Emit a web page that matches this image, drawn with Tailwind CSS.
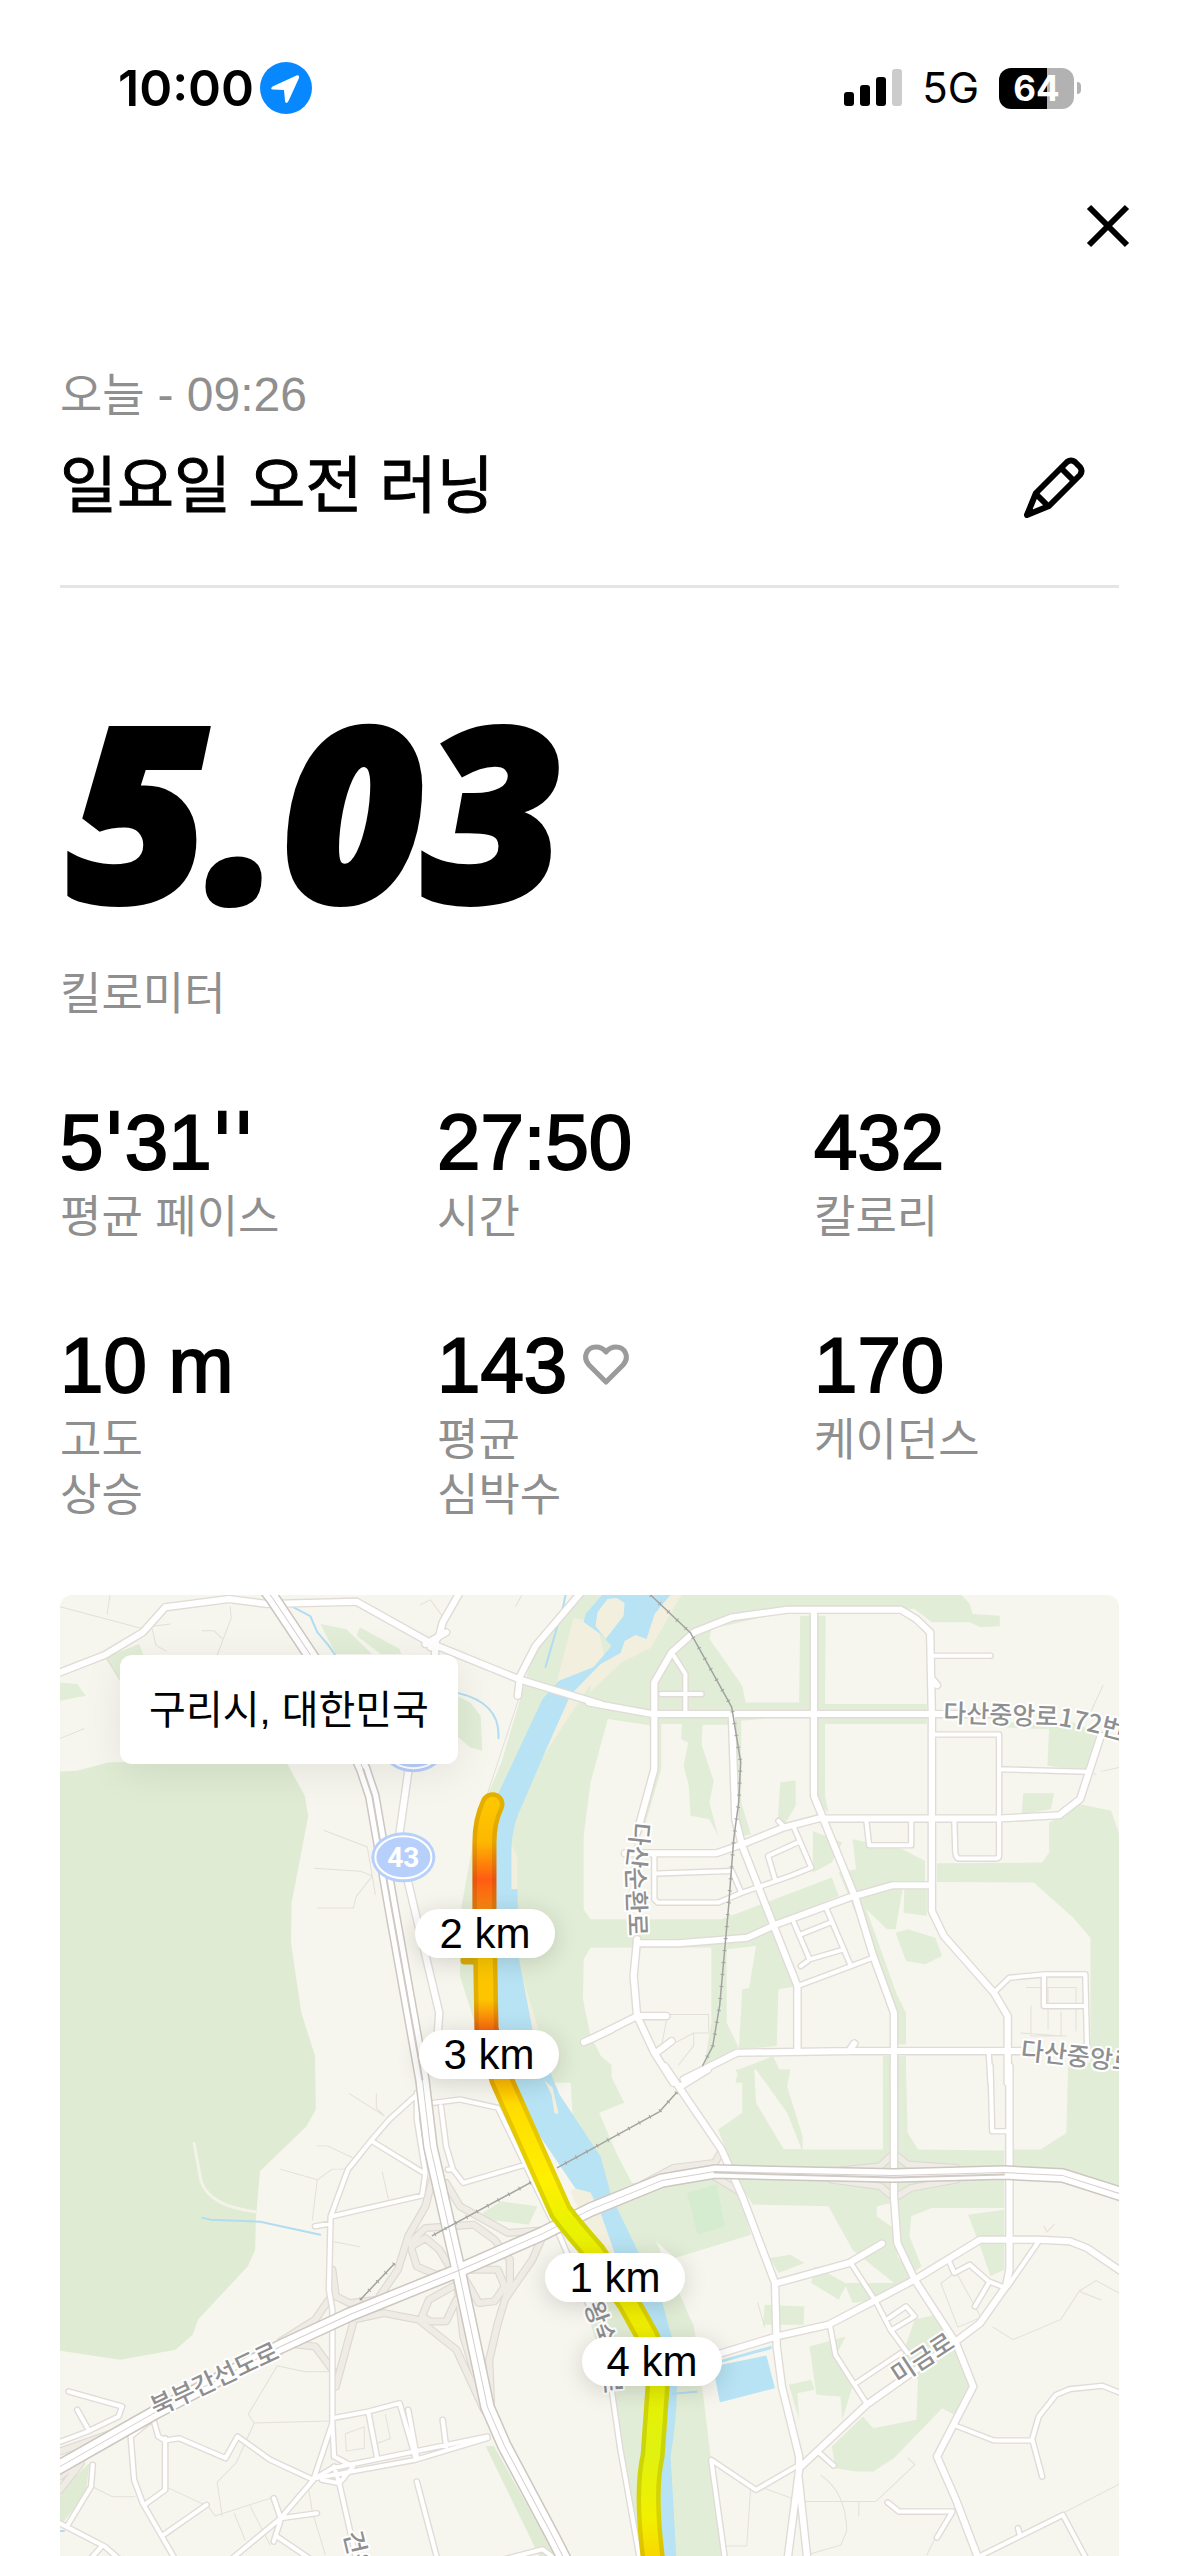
<!DOCTYPE html>
<html lang="ko">
<head>
<meta charset="utf-8">
<meta name="viewport" content="width=device-width, initial-scale=1">
<title>일요일 오전 러닝</title>
<script src="https://cdn.jsdelivr.net/npm/@tailwindcss/browser@4"></script>
</head>
<body class="flex min-h-screen flex-col bg-white font-['Liberation_Sans','Noto_Sans_CJK_KR',sans-serif] text-black">

<header>
  <div class="flex h-44 items-center justify-between pl-[118px] pr-[98px] font-['Inter',sans-serif]">
    <div class="flex items-center gap-1.5">
      <span class="text-[50px] leading-none font-semibold">10:00</span>
      <svg class="size-[52px]" viewBox="0 0 52 52" role="img" aria-label="위치 사용 중"><circle cx="26" cy="26" r="26" fill="#0788ff"/><path d="M36.500 13.500 12.500 24.500Q9.500 27 13 27.500L24 28 25 39Q26 43 28.500 39L39 16Q39.500 12.500 36.500 13.500Z" fill="#fff"/></svg>
    </div>
    <div class="flex items-center gap-5">
      <svg class="h-[38px] w-[58px]" viewBox="0 0 58 38" role="img" aria-label="신호"><rect y="23" width="10" height="14" rx="3"/><rect x="16" y="16" width="10" height="21" rx="3"/><rect x="32" y="8" width="10" height="29" rx="3"/><rect x="48" width="10" height="37" rx="3" fill="#ccc"/></svg>
      <span class="text-[42px] leading-none">5G</span>
      <div class="flex items-center gap-[3px]">
        <div class="flex h-[41px] w-[75px] items-center justify-center rounded-xl bg-linear-to-r from-black from-64% to-[#b2b2b2] to-64% text-[35px] leading-none font-bold text-white">64</div>
        <div class="h-3 w-1 rounded-r-full bg-[#b2b2b2]"></div>
      </div>
    </div>
  </div>
  <div class="flex h-[100px] items-center justify-end pr-[39px]">
    <button type="button" aria-label="닫기" class="size-16"><svg class="size-16" viewBox="0 0 64 64" fill="none" stroke="#000" stroke-width="6"><path d="M13 13 51 51M51 13 13 51"/></svg></button>
  </div>
</header>

<main class="flex grow flex-col px-[60px] pt-[89px]">
  <p class="text-[46px] leading-[60px] text-[#8f8f8f]">오늘 <span class="text-[48px]">- 09:26</span></p>
  <div class="mt-[17px] flex h-[146px] items-start justify-between border-b-3 border-[#e5e5e5] pr-[30px]">
    <h1 class="text-[62px] leading-[90px] [-webkit-text-stroke:1px_black]">일요일 오전 러닝</h1>
    <button type="button" aria-label="이름 편집" class="mt-2.5 size-[70px]"><svg class="size-[70px]" viewBox="0 0 70 70" fill="none" stroke="#000" stroke-width="6" stroke-linejoin="round"><path d="M17 41 48 10Q52 7 56 10L61 15Q64 19 61 23L30 54 8 63Z"/><path d="M42 16 55 29M17 42 29 54"/></svg></button>
  </div>

  <p class="mt-[120px] pl-2 text-[242px] leading-[200px] font-extrabold italic font-['Open_Sans',sans-serif] [-webkit-text-stroke:6px_black]">5.03</p>
  <p class="mt-[59px] text-[45px] leading-[55px] text-[#8f8f8f]">킬로미터</p>

  <dl class="mt-20 grid grid-cols-3 gap-x-[72px] gap-y-20">
    <div class="flex flex-col-reverse justify-end gap-2">
      <dt class="text-[45px] leading-[55px] whitespace-nowrap text-[#8f8f8f]">평균 페이스</dt>
      <dd class="text-[78px] leading-[80px] [-webkit-text-stroke:2px_black]">5<span class="leading-[40px] font-['DejaVu_Sans',sans-serif]">'</span>31<span class="leading-[40px] font-['DejaVu_Sans',sans-serif]">''</span></dd>
    </div>
    <div class="flex flex-col-reverse justify-end gap-2">
      <dt class="text-[45px] leading-[55px] text-[#8f8f8f]">시간</dt>
      <dd class="text-[78px] leading-[80px] [-webkit-text-stroke:2px_black]">27:50</dd>
    </div>
    <div class="flex flex-col-reverse justify-end gap-2">
      <dt class="text-[45px] leading-[55px] text-[#8f8f8f]">칼로리</dt>
      <dd class="text-[78px] leading-[80px] [-webkit-text-stroke:2px_black]">432</dd>
    </div>
    <div class="flex flex-col-reverse justify-end gap-2">
      <dt class="text-[45px] leading-[55px] text-[#8f8f8f]">고도<br>상승</dt>
      <dd class="text-[78px] leading-[80px] [-webkit-text-stroke:2px_black]">10 m</dd>
    </div>
    <div class="flex flex-col-reverse justify-end gap-2">
      <dt class="text-[45px] leading-[55px] text-[#8f8f8f]">평균<br>심박수</dt>
      <dd class="flex items-center gap-4 text-[78px] leading-[80px] [-webkit-text-stroke:2px_black]">143
        <svg class="h-[42px] w-[46px]" viewBox="0 0 46 42" fill="none" stroke="#9b9b9b" stroke-width="5" stroke-linejoin="round"><path d="M23 38 6 21C-1 13 4 3 13 3Q19 3 23 8Q27 3 33 3C42 3 47 13 40 21Z"/></svg>
      </dd>
    </div>
    <div class="flex flex-col-reverse justify-end gap-2">
      <dt class="text-[45px] leading-[55px] text-[#8f8f8f]">케이던스</dt>
      <dd class="text-[78px] leading-[80px] [-webkit-text-stroke:2px_black]">170</dd>
    </div>
  </dl>

  <section aria-label="러닝 경로 지도" class="relative mt-[72px] min-h-[940px] grow overflow-hidden rounded-t-xl bg-[#f6f6ee]">
    <svg class="absolute inset-0 size-full" viewBox="0 0 1059 960" preserveAspectRatio="xMinYMin slice" fill="none" stroke-linejoin="round" stroke-linecap="round">
      <defs>
        <linearGradient id="pace" gradientUnits="userSpaceOnUse" x1="0" y1="209" x2="0" y2="960">
          <stop offset="0" stop-color="#fdc600"/><stop offset=".05" stop-color="#fdb800"/><stop offset=".1" stop-color="#ff5b12"/><stop offset=".14" stop-color="#f78a10"/><stop offset=".2" stop-color="#fcc800"/><stop offset=".26" stop-color="#fdc400"/><stop offset=".3" stop-color="#f8680f"/><stop offset=".36" stop-color="#fcb000"/><stop offset=".4" stop-color="#ffdc00"/><stop offset=".5" stop-color="#fff000"/><stop offset=".56" stop-color="#e9f200"/><stop offset=".65" stop-color="#f5ee00"/><stop offset=".76" stop-color="#eaf000"/><stop offset=".86" stop-color="#dff210"/><stop offset=".95" stop-color="#f1f000"/><stop offset="1" stop-color="#f8d800"/>
        </linearGradient>
        <g id="wide">
          <path transform="translate(0 -6) scale(.3444 .3333)" d="M-20 258 130 198 240 130 305 55 490 30 600 45 860 38 1080 165 1330 270 1568 345M1165 0 1110 100 1100 140 1075 175M1120 130 1060 165M1090 160 1085 240M1520 0 1380 170 1335 260 1328 320M1025 440 985 730M1010 880 1100 1270 1090 1420M1520 1358 1600 1320"/>
          <path transform="translate(530 -6) scale(.3444 .3333)" d="M-5 340 180 375H1200M185 375V280L235 190 300 130 410 85 570 62H900L945 90 985 130 990 380V965L1025 1040 1170 1210 1210 1280V1480M185 375V540L135 730M135 1050 125 1160 135 1280 185 1390 240 1480M648 62V620L770 930 820 1100 880 1270V1480M410 380 420 690 440 770 600 1190V1380M100 792H365L440 765 560 715 660 688H1185L1360 678 1420 630 1480 440M135 1062H255L455 1045 540 1005 750 925 875 888H985M0 1350 135 1280H220M190 1390 235 1355M270 1470 425 1390 750 1385H1250M750 1385 765 1362M990 270 1005 288"/>
          <path transform="translate(530 474) scale(.3444 .3333)" d="M215 -10 380 240 440 380 535 640 540 830 555 950 605 1160V1200L570 1480M603 1220 630 1480M880 -10V380L890 520 940 630 1060 820 1110 950 1005 1160 1060 1290 1130 1480M1215 -10V600L1205 650 1130 760 1060 815 800 1005 610 1190M540 640 750 580 845 522M380 850 540 800 690 765 940 630 1130 510H1300L1390 515 1440 535 1560 620M262 50 340 0"/>
        </g>
        <g id="narrow">
          <path transform="translate(530 -6) scale(.3444 .3333)" d="M235 190 275 255V370M205 315H322M990 200H1160M1000 436H1185V800Q1185 808 1170 808H1070Q1060 808 1058 790L1055 690M1185 540 1440 548M800 695 808 768H930V695M185 800V930L195 940H370L440 910 580 860 640 835 590 715M190 853 410 845 435 905M535 870 515 800 600 760M590 1000 635 1110 735 1080M610 1035 695 1000M685 960 755 1130 820 1105M755 1130 600 1190M1170 1210 1215 1165 1320 1155H1435L1440 1370M1315 1160V1250H1435M1155 1390 1160 1480M610 1130 630 1115M545 695 560 712"/>
          <path transform="translate(530 474) scale(.3444 .3333)" d="M755 580 830 700 870 780 920 850M695 770 710 855 800 1000M770 940 900 850M865 745 915 710 940 740 875 780M1040 575 1055 610 1100 585 1155 635 1205 655M1155 640 1115 710M1300 515 1210 650M1160 -10 1165 185H1210M1065 1070 1170 1112H1280L1300 1040 1350 975 1390 958 1485 948 1550 975M1282 1112 1310 1220M605 1185 480 1260 350 1170 390 1470M665 1150 705 1187M862 1298 895 1325H1050L1005 1403M1130 1458 1370 1335 1445 1480M1240 1375 1245 1395M60 950 85 1130 145 1480"/>
          <path transform="translate(0 474) scale(.3444 .3333)" d="M1030 80 955 150 905 210 835 300 785 440 780 660 790 720V1060L795 1160M790 440 1050 378 1060 310 1035 150V70M905 215 1055 310M1085 100 1160 90 1270 115 1450 500 1540 720M1105 110 1120 230 1140 300 1170 340 1350 285M1125 300H1140M740 470 785 462M25 965 180 1010 170 1040 80 1085-10 1120M50 1020 80 1075M270 1045 285 1100 305 1112 345 1105 480 1165 515 1100 610 1170 735 1230 790 1060M270 1045 205 1100 215 1230 240 1300 335 1470M305 1105V1260L245 1305M300 1395 425 1305M735 1230 640 1345 500 1465M620 1285 640 1345 745 1330M640 1350 620 1415M630 1400 730 1470M790 1045 895 1025 985 1000 1030 1160M895 1030 920 1165M1010 1020 1035 1160M740 1225 790 1195 1240 1100M740 1225 1030 1170 1240 1105M1110 1050 1120 1130M795 1160 850 1190 810 1240 845 1400 860 1470M760 1230 810 1240 795 1190M1035 1235 1095 1470M95 1185 90 1250 20 1370M-10 1355 130 1430 175 1470M90 1465 120 1430M1280 1470 1400 1438 1440 1470"/>
        </g>
        <g id="ramps">
          <path transform="translate(0 474) scale(.3444 .3333)" d="M1080 330 1060 410 1010 500 980 600 920 690 840 700 800 680 790 600M640 815 740 750 780 690M1015 520 1060 475 1200 465 1260 510 1305 570V640L1270 760 1245 870 1250 1000M1020 540 1035 590 1090 615 1160 600M1020 530 1060 505 1100 540 1130 590M1160 600 1270 600 1290 650 1260 695 1215 700 1170 620M1140 650 1070 690 1050 740 1075 755H1120L1150 690M1120 340 1160 410 1300 490 1420 480M1400 500 1370 570 1290 690M850 750 940 730 1040 750 1150 840 1230 1020M1150 620 1170 800 1230 1000M850 760 800 950M640 820 740 830 790 900M0 1220 130 1110 200 1070M0 1260 60 1180M0 1145 150 1090"/>
          <path transform="translate(530 474) scale(.3444 .3333)" d="M150 345 240 295 360 280 380 245M360 320 430 365M700 305 840 290 870 260M1060 295 920 285 890 260M700 330 840 350 875 380M1060 330 930 355 890 380"/>
        </g>
        <g id="highway">
          <path d="M207-4 213 4 253 64 303 174 312 201 331 311 362 484 370 551 398 674 427 811 444 850 492 940 515 985"/>
          <path d="M-6 874 96 816 220 751 289 719 400 674 482 638 530 614 601 585 654 576 833 580 943 577 1002 580 1065 600"/>
        </g>
        <g id="rail">
          <path d="M590 0 630 38 671 112 680 167 678 207 673 244 668 310 659 410 652 451 642 470M616 497 599 516 530 554 497 572M470 587 372 640M334 668 300 704"/>
        </g>
        <path id="route" d="M432 209Q424 226 424 247V314L426 434 441 484 500 616Q512 632 534 657L568 707 587 741Q598 765 597 790L592 860Q584 895 592 960V985"/>
        <path id="nameA" transform="translate(530 -6) scale(.3444 .3333)" d="M1022 398 1360 410Q1450 424 1640 480"/>
        <path id="nameB" transform="translate(530 -6) scale(.3444 .3333)" d="M120 698 104 850 112 1080"/>
        <path id="nameC" transform="translate(530 -6) scale(.3444 .3333)" d="M1246 1408 1650 1455"/>
        <path id="nameD" transform="translate(0 474) scale(.3444 .3333)" d="M278 1040 720 825"/>
        <path id="nameE" transform="translate(530 474) scale(.3444 .3333)" d="M893 944 1120 790"/>
        <path id="nameF" transform="translate(530 474) scale(.3444 .3333)" d="M-18 705 30 850 45 1040"/>
        <path id="nameG" transform="translate(0 474) scale(.3444 .3333)" d="M822 1390 880 1640"/>
      </defs>

      <!-- parks and woods -->
      <g fill="#e2edd7">
        <path transform="translate(0 -6) scale(.3444 .3333)" d="M1500 0 1420 110 1375 180 1335 330 1280 520 1240 620 1200 750 1165 950 1160 1160 1200 1290 1270 1480H1600V0ZM130 205 230 165 243 200 170 270ZM0 280 50 285 75 320 0 335ZM755 105 830 120 905 195H800ZM870 115 985 180 990 195H930L860 140ZM1150 320 1190 340 1220 380 1225 485 1190 475 1150 440Z"/>
        <path fill="#dfebd3" transform="translate(0 -6) scale(.3444 .3333)" d="M0 547 50 545 140 520 500 510 660 525 710 620 720 680 672 940 670 1060 700 1270 740 1400V1482H0Z"/>
        <path fill="#dfebd3" transform="translate(0 474) scale(.3444 .3333)" d="M0 0H740L742 120 715 170 580 305 568 450 566 540 545 590 400 750 385 795 335 840 175 870 0 843ZM0 1260 85 1180 75 1270 0 1370ZM1235 1130 1258 1128 1450 1480H1400Z"/>
        <path transform="translate(0 474) scale(.3444 .3333)" d="M1225 430 1280 395 1385 410 1360 465 1240 450Z"/>
        <path transform="translate(530 -6) scale(.3444 .3333)" d="M-20 0H1060L1100 45 1108 75 1187 80V112L1130 115 1100 100H990L940 60 640 50 350 120 345 150 440 290 450 340H605L608 80H682L680 345 975 345V405H680V620L690 670 655 640 645 375 437 395V640L465 735 420 745 400 407H325L322 465 357 575 345 640 370 740 345 690 290 680 285 590 270 530 283 460 263 450 265 405H205V540L160 700 135 740 100 990H380L700 865 720 920 540 1000 600 1190 545 1200 540 1370 430 1380 440 1200 460 1195 480 1070 395 1080V1300L430 1375 330 1425 350 1300V1075L0 1075V1480H-20Z"/>
        <path transform="translate(530 -6) scale(.3444 .3333)" d="M550 580 595 573V650L560 710 540 740ZM645 725 730 760 700 820 645 850ZM760 750 905 780 970 815V880L905 900 885 1020H860L800 960 890 1220 915 1270V1365H890L885 1260 720 850 770 840ZM910 900H975V980L908 970ZM885 1030 920 1020 1000 1045 1020 1100 970 1125 915 1115ZM1005 822 1310 820 1330 790V700L1360 685 1420 645 1510 665 1535 740V1480H1450V1045L1400 985 1285 880 1005 878ZM1190 400H1400L1470 430 1435 545 1325 530 1330 420 1190 415ZM1255 612H1345L1335 660 1250 675ZM848 1400H915V1480H848ZM1385 1420H1535V1480H1385ZM430 1440 530 1400 565 1480H420ZM0 1340 55 1480H0Z"/>
        <path transform="translate(530 474) scale(.3444 .3333)" d="M-60 0H50L98 100 25 130 75 250 120 340 360 330 430 370 465 495 245 565 190 515 300 770 325 960 385 1480H145L75 1130 60 950-20 700ZM370 180 440 130V40L420 0H580L570 50 615 200V240H848V0H915L920 190 950 240 1200 243V415L990 415 930 440 925 500 960 590 935 610 895 520 875 400 830 410V440L885 480 890 560 935 620 830 690 760 700 740 650 720 690 640 640 650 590 740 640 880 640 760 540 690 410 470 405 430 340ZM1225 240H1305L1380 190 1385 0H1535V350L1370 300 1225 290ZM1095 435 1200 420V600L1160 620 1130 530ZM520 565 580 555 620 580 545 610ZM505 705 620 710 618 765H500ZM635 830 740 800 710 860 760 950 730 1050 725 980 655 975ZM575 945 640 930 650 960 600 970 605 1050ZM940 750 1000 735 1060 850 1100 950 1055 1035 1020 1015 880 1165 820 1205H770L710 1195 700 1130 790 1040 820 1075 945 1050 950 930 900 870Z"/>
      </g>
      <g fill="#f6f6ee">
        <path transform="translate(530 -6) scale(.3444 .3333)" d="M50 390 180 410V540L130 740 100 990H0L-20 960V740L0 580ZM0 1075-20 1110-22 1230 0 1340 30 1400 120 1480H340L325 1430 350 1300V1075Z"/>
        <path transform="translate(530 474) scale(.3444 .3333)" d="M475 0 480 100 560 238H612L570 130 480 0Z"/>
      </g>
      <path fill="#d5ecd0" transform="translate(530 474) scale(.3444 .3333)" d="M280 370 365 345 390 470 310 495Z"/>

      <!-- river, sand banks, pond -->
      <path fill="#f3efdf" d="M513 23 536 27 545 66 482 162 487 145 495 92ZM510 596Q525 584 545 596L560 654 540 664ZM450 247V294H457V261ZM462 382 478 434H470ZM586 19 613-2H622L590 53 560 68 530 97V77Z"/>
      <path fill="#b7e3f4" d="M545-4H613L594 19 586 44 575 40 564 46 560 58 540 69 510 100 484 158 463 207Q450 232 451 260V294H457L458 361 472 434 499 499 540 561 551 601 578 657 601 704 611 741Q622 789 610 860L617 985H600L597 790 585 731 554 657 540 617 530 597 515 593 441 484 426 434 424 314 430 209 437 200 482 104 498 86 533 72 551 51 540 39 523 27 525 19Z"/>
      <path fill="#f3efdf" d="M535 31 537 17 547 4 556 3 564 8 563 21 545 44ZM484 485 492 492 498 518 494 518 491 499Z"/>
      <path fill="#b7e3f4" transform="translate(530 474) scale(.3444 .3333)" d="M355 890 510 857 535 955 405 990 375 997ZM380 870 525 828V838L380 878Z"/>
      <path stroke="#b0ddf1" stroke-width="2" d="M233 12 250 21 257 37 268 50 275 60M398 98Q440 108 438 143M142 622 150 624 200 626 260 639M505 0 503 10 485 72M612 798 636 796M0 935 4 935"/>

      <!-- footpaths -->
      <g stroke="#e3dfd9" stroke-width="1">
        <path transform="scale(1 .968)" d="M0 12 80 34 110 30M50 0 47 20M170 12 171 24 157 62M142 37 154 37 162 45M92 35 96 52 106 58M45 62 60 88M0 148 24 138M264 243 307 260 315 309M254 282 300 285 312 290 296 311 293 323H257M360 10 370 5 382 22M455 12 463-3M458 108 427 205M607 433H648V452H633L600 470 607 433M633 452V465L618 485M970 424V455H1005M987 405V448M1000 430V455L960 452M965 405H1015V450M1030 120 1042 93M1040 182 1058 178M1035 185 1020 182"/>
        <path transform="translate(0 15) scale(1 .968)" d="M289 499 324 522M316 499V514L324 522M257 553H267L292 565M220 577 257 588 272 577H285M257 588 252 630M322 580 328 608M274 652 299 657M188 830 217 780 245 786H268M188 830 194 839 270 837M194 839 176 880 157 900 162 935M33 905 52 915H75M108 906 148 925 155 935 215 915M174 932 185 960M190 925 210 965M285 850 304 843V865L286 868ZM325 830 330 855 312 862M248 905 252 930 265 975M983 636 986 642 993 634M880 695 895 683 920 730 897 740 880 695M932 740 952 753 1000 732 1018 703 1035 692 1058 705M1018 703 1040 712M760 893Q785 910 786 950L780 965 750 974M700 905 740 920H815L854 882 847 875M690 905 686 966H665M798 920V935M1058 902 1000 933M875 956 866 975M697 715 704 740"/>
      </g>

      <!-- road network -->
      <use href="#ramps" stroke="#ded9d3" stroke-width="24"/>
      <use href="#ramps" stroke="#efece6" stroke-width="17"/>
      <use href="#narrow" stroke="#e0dbd6" stroke-width="20"/>
      <use href="#wide" stroke="#e0dbd6" stroke-width="26"/>
      <use href="#narrow" stroke="#fff" stroke-width="12"/>
      <use href="#wide" stroke="#fff" stroke-width="18"/>
      <path stroke="#f3f3e8" stroke-width="3" d="M134 548 141 586Q150 611 195 616"/>
      <use href="#highway" stroke="#cdc6c1" stroke-width="15"/>
      <use href="#highway" stroke="#fff" stroke-width="12"/>
      <use href="#highway" stroke="#d6d0cc" stroke-width="1"/>
      <path stroke="#d0c9c4" stroke-width="2" d="M303 174 312 201 331 311 362 484M654 577 833 582 943 579"/>
      <use href="#rail" stroke="#a3a3a0" stroke-width="1.500"/>
      <use href="#rail" stroke="#a3a3a0" stroke-width="4" stroke-linecap="butt" stroke-dasharray="1 11"/>

      <!-- route shields -->
      <g>
        <ellipse cx="353" cy="152" rx="32" ry="25" fill="#b7d0fb"/><ellipse cx="353" cy="152" rx="28" ry="21" stroke="#fff" stroke-width="2"/>
        <ellipse cx="343" cy="262" rx="32" ry="25" fill="#b7d0fb"/><ellipse cx="343" cy="262" rx="28" ry="21" stroke="#fff" stroke-width="2"/>
        <text x="343" y="272" text-anchor="middle" fill="#fff" class="font-['Roboto',sans-serif] text-[28px] font-bold">43</text>
      </g>

      <!-- road names -->
      <g fill="#8f8f90" stroke="#fff" stroke-width="4" paint-order="stroke" class="font-['Noto_Sans_CJK_KR',sans-serif] text-[25px] font-medium">
        <text><textPath href="#nameA">다산중앙로172번길</textPath></text>
        <text><textPath href="#nameB">다산순환로</textPath></text>
        <text><textPath href="#nameC">다산중앙로</textPath></text>
        <text><textPath href="#nameD">북부간선도로</textPath></text>
        <text><textPath href="#nameE">미금로</textPath></text>
        <text><textPath href="#nameF">왕숙천로</textPath></text>
        <text><textPath href="#nameG">건원대로</textPath></text>
      </g>

      <!-- run, coloured by pace -->
      <path d="M404 365H420" stroke="#dcae08" stroke-width="8"/>
      <use href="#route" stroke="url(#pace)" stroke-width="24"/>
      <use href="#route" stroke="#604000" stroke-opacity=".16" stroke-width="24"/>
      <use href="#route" stroke="url(#pace)" stroke-width="15"/>
    </svg>

    <p class="absolute top-[60px] left-[60px] flex h-[109px] w-[338px] items-center justify-center rounded-xl bg-white text-[40px] leading-none shadow-[0_8px_40px_rgba(0,0,0,0.08)]">구리시, 대한민국</p>
    <span class="absolute top-[314px] left-[355px] flex h-[49px] w-[140px] items-center justify-center rounded-full bg-white text-[42px] leading-none shadow-[0_4px_24px_rgba(0,0,0,0.15)]">2 km</span>
    <span class="absolute top-[435px] left-[359px] flex h-[49px] w-[140px] items-center justify-center rounded-full bg-white text-[42px] leading-none shadow-[0_4px_24px_rgba(0,0,0,0.15)]">3 km</span>
    <span class="absolute top-[658px] left-[485px] flex h-[49px] w-[140px] items-center justify-center rounded-full bg-white text-[42px] leading-none shadow-[0_4px_24px_rgba(0,0,0,0.15)]">1 km</span>
    <span class="absolute top-[742px] left-[522px] flex h-[49px] w-[140px] items-center justify-center rounded-full bg-white text-[42px] leading-none shadow-[0_4px_24px_rgba(0,0,0,0.15)]">4 km</span>
  </section>
</main>
</body>
</html>
